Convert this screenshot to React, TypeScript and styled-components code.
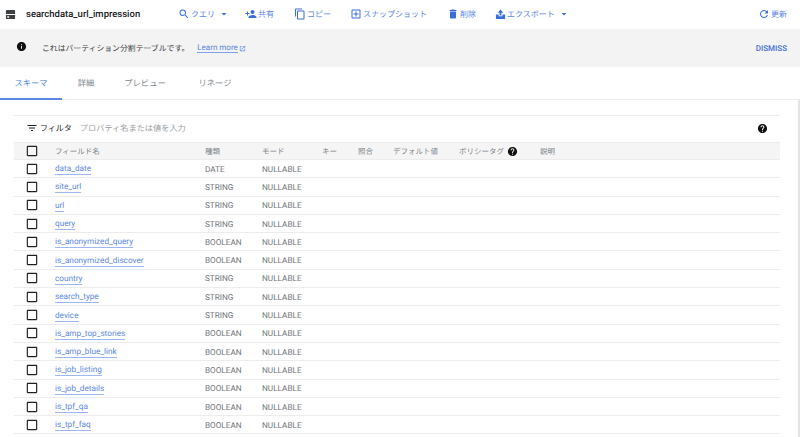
import React from 'react'
import styled, { createGlobalStyle } from 'styled-components'
import {
  MdSearch,
  MdPersonAdd,
  MdContentCopy,
  MdOutlineAddBox,
  MdDelete,
  MdRefresh,
  MdInfo,
  MdHelp,
  MdOpenInNew,
  MdFilterList,
  MdArrowDropDown,
  MdCheckBoxOutlineBlank,
} from 'react-icons/md'

const GlobalStyle = createGlobalStyle`
  html, body {
    margin: 0;
    padding: 0;
    background: #fff;
    overflow: hidden;
    font-family: Roboto, "Noto Sans CJK JP", sans-serif;
    text-rendering: geometricPrecision;
  }
`

const Page = styled.div`
  width: 800px;
  height: 437px;
  overflow: hidden;
`

const Toolbar = styled.div`
  height: 29px;
  box-sizing: border-box;
  padding: 0 0 1px 5px;
  display: flex;
  align-items: center;
`

const TableGlyph = styled.svg`
  width: 11px;
  height: 11px;
  margin-right: 10px;
  fill: #3c4043;
  flex: none;
`

const TableName = styled.div`
  width: 152px;
  font-size: 9.5px;
  font-weight: 500;
  color: #202124;
`

const Action = styled.div<{ $width: number }>`
  width: ${(p) => p.$width}px;
  display: flex;
  align-items: center;
  gap: 1px;
  font-size: 8px;
  color: #5a86e2;
  white-space: nowrap;
  svg {
    font-size: 12px;
    color: #3b6fd8;
    flex: none;
  }
`

const Caret = styled(MdArrowDropDown)`
  margin-left: 2px;
`

const ExportGlyph = styled.svg`
  width: 11px;
  height: 11px;
  fill: #3b6fd8;
`

const Refresh = styled(Action)`
  margin-left: auto;
  padding-right: 13px;
  justify-content: flex-end;
`

const Banner = styled.div`
  height: 38px;
  background: #f3f3f3;
  display: flex;
  align-items: center;
  padding: 0 13px 0 16px;
`

const InfoIcon = styled(MdInfo)`
  font-size: 11px;
  color: #111;
  margin-right: 15px;
  margin-top: -3px;
`

const BannerText = styled.span`
  font-size: 7.85px;
  color: #3c4043;
  margin-right: 8px;
`

const LearnMore = styled.span`
  display: flex;
  align-items: center;
  gap: 1px;
  font-size: 8px;
  color: #5a86e2;
  svg {
    font-size: 7px;
  }
`

const LearnText = styled.span`
  border-bottom: 1px solid #7fa3ea;
`

const Dismiss = styled.span`
  margin-left: auto;
  font-size: 8px;
  font-weight: 500;
  color: #3f6fd8;
`

const Tabs = styled.div`
  height: 33px;
  display: flex;
  border-bottom: 1px solid #ececec;
  box-sizing: border-box;
`

const Tab = styled.div<{ $active?: boolean; $width: number }>`
  width: ${(p) => p.$width}px;
  height: 33px;
  box-sizing: border-box;
  display: flex;
  align-items: center;
  justify-content: center;
  font-size: 8.3px;
  color: ${(p) => (p.$active ? '#4f7fe0' : '#80868b')};
  border-bottom: 2px solid ${(p) => (p.$active ? '#5b86e5' : 'transparent')};
`

const Body = styled.div`
  height: 337px;
  padding: 15px 18px 0 14px;
  border-right: 2px solid #e4e4e4;
  box-sizing: border-box;
`

const FilterBar = styled.div`
  height: 27px;
  box-sizing: border-box;
  border-top: 1px solid #ececec;
  padding: 0 12px 2px 12px;
  display: flex;
  align-items: center;
`

const FilterIcon = styled(MdFilterList)`
  font-size: 12px;
  color: #202124;
  margin-right: 2px;
`

const FilterLabel = styled.span`
  font-size: 8px;
  color: #202124;
  margin-right: 8px;
`

const FilterHint = styled.span`
  font-size: 8.2px;
  color: #9aa0a6;
`

const HelpIcon = styled(MdHelp)`
  font-size: 11px;
  color: #111;
`

const FilterHelp = styled(HelpIcon)`
  margin-left: auto;
`

const columns = '41px 150px 57px 60px 36px 35px 66px 81px 1fr'

const HeaderRow = styled.div`
  height: 18px;
  display: grid;
  grid-template-columns: ${columns};
  align-items: center;
  background: #f5f5f5;
  border-top: 1px solid #ececec;
  border-bottom: 1px solid #ececec;
  box-sizing: border-box;
  font-size: 7.5px;
  color: #80868b;
`

const Row = styled.div`
  height: 18.3px;
  padding-top: 2px;
  display: grid;
  grid-template-columns: ${columns};
  align-items: center;
  border-bottom: 1px solid #ececec;
  box-sizing: border-box;
  font-size: 8.2px;
  color: #70757a;
`

const Check = styled(MdCheckBoxOutlineBlank)`
  font-size: 14px;
  color: #202124;
  margin-left: 11px;
`

const RowCheck = styled(Check)`
  margin-top: -2px;
`

const FieldName = styled.span`
  justify-self: start;
  font-size: 8.2px;
  color: #5a86e2;
  border-bottom: 1px solid #9db8ee;
  line-height: 10px;
`

const PolicyCell = styled.span`
  display: flex;
  align-items: center;
  gap: 3px;
`

const fields: [string, string][] = [
  ['data_date', 'DATE'],
  ['site_url', 'STRING'],
  ['url', 'STRING'],
  ['query', 'STRING'],
  ['is_anonymized_query', 'BOOLEAN'],
  ['is_anonymized_discover', 'BOOLEAN'],
  ['country', 'STRING'],
  ['search_type', 'STRING'],
  ['device', 'STRING'],
  ['is_amp_top_stories', 'BOOLEAN'],
  ['is_amp_blue_link', 'BOOLEAN'],
  ['is_job_listing', 'BOOLEAN'],
  ['is_job_details', 'BOOLEAN'],
  ['is_tpf_qa', 'BOOLEAN'],
  ['is_tpf_faq', 'BOOLEAN'],
]

export default function App() {
  return (
    <Page>
      <GlobalStyle />
      <Toolbar>
        <TableGlyph viewBox="0 0 12 12">
          <path d="M2 1h8a1 1 0 0 1 1 1v3.5H1V2a1 1 0 0 1 1-1zM1 6.5h10V10a1 1 0 0 1-1 1H2a1 1 0 0 1-1-1zM2.5 8v1.5h2V8z" />
        </TableGlyph>
        <TableName>searchdata_url_impression</TableName>
        <Action $width={67}><MdSearch />クエリ<Caret /></Action>
        <Action $width={49}><MdPersonAdd />共有</Action>
        <Action $width={56}><MdContentCopy />コピー</Action>
        <Action $width={97}><MdOutlineAddBox />スナップショット</Action>
        <Action $width={48}><MdDelete />削除</Action>
        <Action $width={80}>
          <ExportGlyph viewBox="0 0 12 12">
            <path d="M6 .5 9 4H7v3H5V4H3zM1 6h3v2h4V6h3v5H1z" />
          </ExportGlyph>
          エクスポート<Caret />
        </Action>
        <Refresh $width={60}><MdRefresh />更新</Refresh>
      </Toolbar>
      <Banner>
        <InfoIcon />
        <BannerText>これはパーティション分割テーブルです。</BannerText>
        <LearnMore><LearnText>Learn more</LearnText><MdOpenInNew /></LearnMore>
        <Dismiss>DISMISS</Dismiss>
      </Banner>
      <Tabs>
        <Tab $active $width={62}>スキーマ</Tab>
        <Tab $width={48}>詳細</Tab>
        <Tab $width={70}>プレビュー</Tab>
        <Tab $width={70}>リネージ</Tab>
      </Tabs>
      <Body>
        <FilterBar>
          <FilterIcon />
          <FilterLabel>フィルタ</FilterLabel>
          <FilterHint>プロパティ名または値を入力</FilterHint>
          <FilterHelp />
        </FilterBar>
        <HeaderRow>
          <Check />
          <span>フィールド名</span>
          <span>種類</span>
          <span>モード</span>
          <span>キー</span>
          <span>照合</span>
          <span>デフォルト値</span>
          <PolicyCell>ポリシータグ<HelpIcon /></PolicyCell>
          <span>説明</span>
        </HeaderRow>
        {fields.map(([name, type]) => (
          <Row key={name}>
            <RowCheck />
            <FieldName>{name}</FieldName>
            <span>{type}</span>
            <span>NULLABLE</span>
          </Row>
        ))}
      </Body>
    </Page>
  )
}
